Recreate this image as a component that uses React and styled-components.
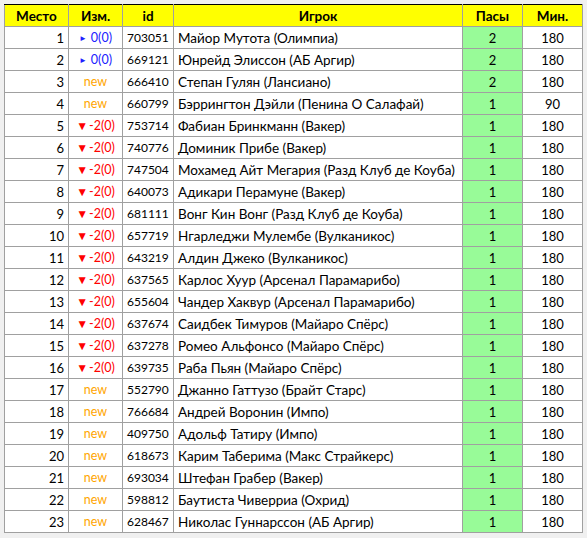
import React from "react";
import styled, { createGlobalStyle } from "styled-components";

const Global = createGlobalStyle`
  html, body { margin: 0; padding: 0; background: #f0f0f0; }
  body { font-family: Lato, "Open Sans", sans-serif; }
`;

const Page = styled.div`
  padding: 4px 0 0 4px;
`;

const Table = styled.table`
  border-collapse: collapse;
  table-layout: fixed;
  width: 579px;
  background: #fff;
  font-size: 13px;
  color: #000;
`;

const HeadCell = styled.th`
  background: #ffff00;
  font-weight: 700;
  height: 21px;
  padding: 0;
  border: 1px solid #a0a0a0;
  border-top: 1px solid #000;
  text-align: center;
  font-size: 13.5px;
`;

const Cell = styled.td`
  height: 21px;
  padding: 0 ${(p) => (p.$align === "right" ? "4px" : "0")} 0
    ${(p) => (p.$align === "left" ? "4px" : "0")};
  border: 1px solid #a0a0a0;
  text-align: ${(p) => p.$align || "center"};
  background: ${(p) => (p.$green ? "#98fb98" : "#fff")};
  font-size: ${(p) => p.$size || "13px"};
  white-space: nowrap;
  overflow: hidden;
`;

const Change = styled.span`
  color: ${(p) => p.$color};
`;

const Arrow = styled.span`
  font-size: ${(p) => p.$size};
  margin-right: ${(p) => p.$gap};
  position: relative;
  top: ${(p) => p.$top};
`;

const rows = [
  [1, "eq", "703051", "Майор Мутота (Олимпиа)", 2, 180],
  [2, "eq", "669121", "Юнрейд Элиссон (АБ Аргир)", 2, 180],
  [3, "new", "666410", "Степан Гулян (Лансиано)", 2, 180],
  [4, "new", "660799", "Бэррингтон Дэйли (Пенина О Салафай)", 1, 90],
  [5, "down", "753714", "Фабиан Бринкманн (Вакер)", 1, 180],
  [6, "down", "740776", "Доминик Прибе (Вакер)", 1, 180],
  [7, "down", "747504", "Мохамед Айт Мегария (Разд Клуб де Коуба)", 1, 180],
  [8, "down", "640073", "Адикари Перамуне (Вакер)", 1, 180],
  [9, "down", "681111", "Вонг Кин Вонг (Разд Клуб де Коуба)", 1, 180],
  [10, "down", "657719", "Нгарледжи Мулембе (Вулканикос)", 1, 180],
  [11, "down", "643219", "Алдин Джеко (Вулканикос)", 1, 180],
  [12, "down", "637565", "Карлос Хуур (Арсенал Парамарибо)", 1, 180],
  [13, "down", "655604", "Чандер Хаквур (Арсенал Парамарибо)", 1, 180],
  [14, "down", "637674", "Саидбек Тимуров (Майаро Спёрс)", 1, 180],
  [15, "down", "637278", "Ромео Альфонсо (Майаро Спёрс)", 1, 180],
  [16, "down", "639735", "Раба Пьян (Майаро Спёрс)", 1, 180],
  [17, "new", "552790", "Джанно Гаттузо (Брайт Старс)", 1, 180],
  [18, "new", "766684", "Андрей Воронин (Импо)", 1, 180],
  [19, "new", "409750", "Адольф Татиру (Импо)", 1, 180],
  [20, "new", "618673", "Карим Таберима (Макс Страйкерс)", 1, 180],
  [21, "new", "693034", "Штефан Грабер (Вакер)", 1, 180],
  [22, "new", "598812", "Баутиста Чиверриа (Охрид)", 1, 180],
  [23, "new", "628467", "Николас Гуннарссон (АБ Аргир)", 1, 180],
];

function ChangeCell({ kind }) {
  if (kind === "new") return <Change $color="#ffa500">new</Change>;
  if (kind === "eq")
    return (
      <Change $color="#2020ff">
        <Arrow $size="8px" $gap="4px" $top="-1px">►</Arrow>0(0)
      </Change>
    );
  return (
    <Change $color="#ff0000">
      <Arrow $size="12px" $gap="1px" $top="0">▼</Arrow>-2(0)
    </Change>
  );
}

export default function App() {
  return (
    <Page>
      <Global />
      <Table>
        <colgroup>
          <col style={{ width: 64 }} />
          <col style={{ width: 54 }} />
          <col style={{ width: 51 }} />
          <col style={{ width: 289 }} />
          <col style={{ width: 60 }} />
          <col style={{ width: 60 }} />
        </colgroup>
        <thead>
          <tr>
            <HeadCell>Место</HeadCell>
            <HeadCell>Изм.</HeadCell>
            <HeadCell>id</HeadCell>
            <HeadCell>Игрок</HeadCell>
            <HeadCell>Пасы</HeadCell>
            <HeadCell>Мин.</HeadCell>
          </tr>
        </thead>
        <tbody>
          {rows.map(([place, kind, id, name, passes, mins]) => (
            <tr key={place}>
              <Cell $align="right">{place}</Cell>
              <Cell $size="12.5px">
                <ChangeCell kind={kind} />
              </Cell>
              <Cell $align="left" $size="12px">{id}</Cell>
              <Cell $align="left" $size="13.5px">{name}</Cell>
              <Cell $green>{passes}</Cell>
              <Cell>{mins}</Cell>
            </tr>
          ))}
        </tbody>
      </Table>
    </Page>
  );
}
